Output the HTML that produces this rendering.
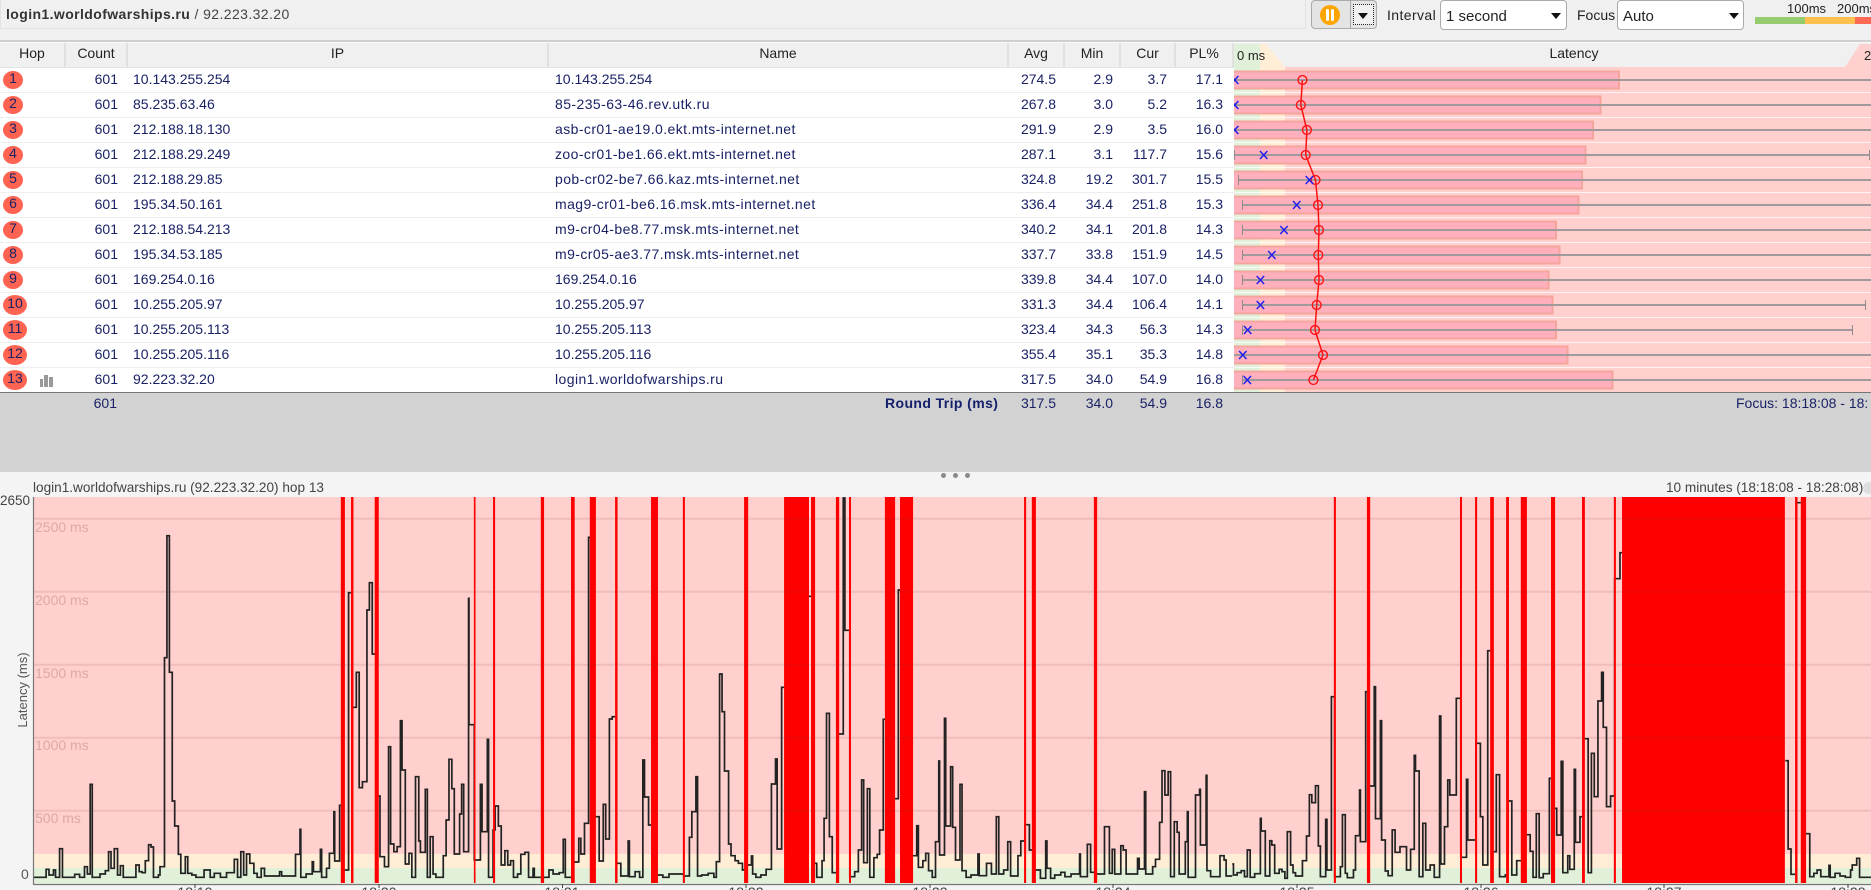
<!DOCTYPE html>
<html>
<head>
<meta charset="utf-8">
<title>PingPlotter</title>
<style>
html,body{margin:0;padding:0;width:1871px;height:890px;overflow:hidden;}
body{position:relative;background:#f4f4f4;font:14px "Liberation Sans",sans-serif;color:#1a2266;}
div,span{position:absolute;white-space:nowrap;}
#w{left:0;top:0;width:1871px;height:890px;overflow:hidden;background:#f4f4f4;}
svg{position:absolute;left:0;top:0;overflow:hidden;}
.toolbar{left:0;top:0;width:1871px;height:41px;background:#f0f0f0;}
.sel{top:0;height:28px;background:#fff;border:1px solid #aaa;border-radius:4px;color:#222;line-height:31px;font-size:15px;}
.sel i{position:absolute;top:12px;width:0;height:0;border-left:5px solid transparent;border-right:5px solid transparent;border-top:6px solid #111;}
.lbl{color:#222;top:7px;line-height:16px;}
.hd{top:43px;height:24px;line-height:20px;background:#f0f0f0;border-right:2px solid #e0e0e0;text-align:center;color:#222;box-sizing:border-box;}
.row{left:0;width:1234px;height:25px;background:#fff;line-height:23px;border-bottom:1px solid #eee;box-sizing:border-box;}
.row span,.sum span{top:0;}
.h{left:3px;top:3px!important;width:20px;height:18px;line-height:15px;text-align:center;background:#ff6453;border-radius:50%;}
.w{left:3px;top:2px!important;width:24px;height:20px;line-height:17px;text-align:center;background:#ff6453;border-radius:50%;}
.c{right:1116px;}.ip{left:133px;}.n{left:555px;}.l{letter-spacing:.42px;}
.a{right:178px;}.m{right:121px;}.u{right:67px;}.p{right:11px;}
.sum{left:0;top:393px;width:1871px;height:79px;background:#d2d2d2;line-height:20px;}
.t{top:884px;font-size:14px;color:#444;line-height:16px;width:60px;margin-left:-30px;text-align:center;}
.g{left:35px;color:#dba9a6;line-height:16px;font-size:14px;}
.d{top:473px;width:5px;height:5px;border-radius:50%;background:#8a8a8a;}
</style>
</head>
<body>
<div id="w">

<div class="toolbar"></div>
<div style="left:0;top:0;width:1306px;height:29px;box-sizing:border-box;border:1px solid #e2e2e2;border-top:0;"></div>
<div style="left:6px;top:6px;line-height:16px;color:#444;letter-spacing:.4px;"><b style="color:#333">login1.worldofwarships.ru</b> / 92.223.32.20</div>

<div style="left:1311px;top:0;width:66px;height:29px;box-sizing:border-box;border:1px solid #aaa;border-radius:4px;background:#e4e4e4;"></div>
<div style="left:1350px;top:1px;width:1px;height:27px;background:#aaa;"></div>
<div style="left:1353px;top:4px;width:21px;height:21px;box-sizing:border-box;border:1px dotted #222;background:#f0f0f0;"></div>
<div style="left:1358px;top:13px;width:0;height:0;border-left:5px solid transparent;border-right:5px solid transparent;border-top:6px solid #111;"></div>
<div style="left:1320px;top:5px;width:20px;height:20px;border-radius:50%;background:#ffa500;"></div>
<div style="left:1326px;top:9px;width:3px;height:12px;background:#fff;border-radius:2px;"></div>
<div style="left:1331px;top:9px;width:3px;height:12px;background:#fff;border-radius:2px;"></div>

<div class="lbl" style="left:1387px;letter-spacing:.4px;">Interval</div>
<div class="sel" style="left:1440px;width:125px;"><span style="left:5px;">1 second</span><i style="left:110px;"></i></div>
<div class="lbl" style="left:1577px;">Focus</div>
<div class="sel" style="left:1617px;width:125px;"><span style="left:5px;">Auto</span><i style="left:111px;"></i></div>

<div style="left:1787px;top:2px;font-size:13px;line-height:14px;color:#222;">100ms</div>
<div style="left:1837px;top:2px;font-size:13px;line-height:14px;color:#222;">200ms</div>
<div style="left:1755px;top:17px;width:50px;height:7px;background:#96cc6d;"></div>
<div style="left:1805px;top:17px;width:50px;height:7px;background:#ffc04f;"></div>
<div style="left:1855px;top:17px;width:16px;height:7px;background:#ff6a55;"></div>

<div style="left:0;top:40px;width:1871px;height:2px;background:#cfcfcf;"></div>
<div style="left:0;top:42px;width:1871px;height:1px;background:#fafafa;"></div>

<div class="hd" style="left:0;width:66px;">Hop</div>
<div class="hd" style="left:66px;width:62px;">Count</div>
<div class="hd" style="left:128px;width:421px;">IP</div>
<div class="hd" style="left:549px;width:460px;">Name</div>
<div class="hd" style="left:1009px;width:56px;">Avg</div>
<div class="hd" style="left:1065px;width:56px;">Min</div>
<div class="hd" style="left:1121px;width:55px;">Cur</div>
<div class="hd" style="left:1176px;width:58px;">PL%</div>
<div style="left:0;top:67px;width:1234px;height:1px;background:#e4e4e4;"></div>

<div class="row" style="top:68px;"><span class="h">1</span><span class="c">601</span><span class="ip">10.143.255.254</span><span class="n">10.143.255.254</span><span class="a">274.5</span><span class="m">2.9</span><span class="u">3.7</span><span class="p">17.1</span></div>
<div class="row" style="top:93px;"><span class="h">2</span><span class="c">601</span><span class="ip">85.235.63.46</span><span class="n l">85-235-63-46.rev.utk.ru</span><span class="a">267.8</span><span class="m">3.0</span><span class="u">5.2</span><span class="p">16.3</span></div>
<div class="row" style="top:118px;"><span class="h">3</span><span class="c">601</span><span class="ip">212.188.18.130</span><span class="n l">asb-cr01-ae19.0.ekt.mts-internet.net</span><span class="a">291.9</span><span class="m">2.9</span><span class="u">3.5</span><span class="p">16.0</span></div>
<div class="row" style="top:143px;"><span class="h">4</span><span class="c">601</span><span class="ip">212.188.29.249</span><span class="n l">zoo-cr01-be1.66.ekt.mts-internet.net</span><span class="a">287.1</span><span class="m">3.1</span><span class="u">117.7</span><span class="p">15.6</span></div>
<div class="row" style="top:168px;"><span class="h">5</span><span class="c">601</span><span class="ip">212.188.29.85</span><span class="n l">pob-cr02-be7.66.kaz.mts-internet.net</span><span class="a">324.8</span><span class="m">19.2</span><span class="u">301.7</span><span class="p">15.5</span></div>
<div class="row" style="top:193px;"><span class="h">6</span><span class="c">601</span><span class="ip">195.34.50.161</span><span class="n l">mag9-cr01-be6.16.msk.mts-internet.net</span><span class="a">336.4</span><span class="m">34.4</span><span class="u">251.8</span><span class="p">15.3</span></div>
<div class="row" style="top:218px;"><span class="h">7</span><span class="c">601</span><span class="ip">212.188.54.213</span><span class="n l">m9-cr04-be8.77.msk.mts-internet.net</span><span class="a">340.2</span><span class="m">34.1</span><span class="u">201.8</span><span class="p">14.3</span></div>
<div class="row" style="top:243px;"><span class="h">8</span><span class="c">601</span><span class="ip">195.34.53.185</span><span class="n l">m9-cr05-ae3.77.msk.mts-internet.net</span><span class="a">337.7</span><span class="m">33.8</span><span class="u">151.9</span><span class="p">14.5</span></div>
<div class="row" style="top:268px;"><span class="h">9</span><span class="c">601</span><span class="ip">169.254.0.16</span><span class="n">169.254.0.16</span><span class="a">339.8</span><span class="m">34.4</span><span class="u">107.0</span><span class="p">14.0</span></div>
<div class="row" style="top:293px;"><span class="w">10</span><span class="c">601</span><span class="ip">10.255.205.97</span><span class="n">10.255.205.97</span><span class="a">331.3</span><span class="m">34.4</span><span class="u">106.4</span><span class="p">14.1</span></div>
<div class="row" style="top:318px;"><span class="w">11</span><span class="c">601</span><span class="ip">10.255.205.113</span><span class="n">10.255.205.113</span><span class="a">323.4</span><span class="m">34.3</span><span class="u">56.3</span><span class="p">14.3</span></div>
<div class="row" style="top:343px;"><span class="w">12</span><span class="c">601</span><span class="ip">10.255.205.116</span><span class="n">10.255.205.116</span><span class="a">355.4</span><span class="m">35.1</span><span class="u">35.3</span><span class="p">14.8</span></div>
<div class="row" style="top:368px;"><span class="w">13</span><span class="c">601</span><span class="ip">92.223.32.20</span><span class="n l">login1.worldofwarships.ru</span><span class="a">317.5</span><span class="m">34.0</span><span class="u">54.9</span><span class="p">16.8</span>
<span style="left:40px;top:11px;width:3px;height:8px;background:#999;"></span><span style="left:44px;top:7px;width:4px;height:12px;background:#999;"></span><span style="left:49px;top:9px;width:4px;height:10px;background:#999;"></span></div>

<!-- latency column -->
<svg width="1871" height="400" style="left:0;top:0;">
  <defs><clipPath id="lc"><rect x="1234" y="44" width="637" height="348"/></clipPath></defs>
  <rect x="1234" y="44" width="637" height="348" fill="#ffd0cd"/>
  <rect x="1234" y="67" width="26" height="325" fill="#e1f0d8"/>
  <rect x="1260" y="67" width="25" height="325" fill="#ffedd6"/>
  <rect x="1234" y="43" width="637" height="24" fill="#f0f0f0"/>
  <rect x="1234" y="44" width="26" height="23" fill="#e1f0d8"/>
  <polygon points="1260,44 1266,44 1285,67 1260,67" fill="#ffedd6"/>
  <polygon points="1845,67 1860,44 1871,44 1871,67" fill="#ffd0cd"/>
  <g stroke="#fff" stroke-opacity=".75" stroke-width="1">
    <path d="M1234 92.5H1871M1234 117.5H1871M1234 142.5H1871M1234 167.5H1871M1234 192.5H1871M1234 217.5H1871M1234 242.5H1871M1234 267.5H1871M1234 292.5H1871M1234 317.5H1871M1234 342.5H1871M1234 367.5H1871"/>
  </g>
  <g clip-path="url(#lc)">
  <g fill="#ffb0bc" stroke="#f4a59c" stroke-width="2">
    <rect x="1228" y="71.5" width="391" height="17"/>
    <rect x="1228" y="96.5" width="372.5" height="17"/>
    <rect x="1228" y="121.5" width="365" height="17"/>
    <rect x="1228" y="146.5" width="357.5" height="17"/>
    <rect x="1228" y="171.5" width="354" height="17"/>
    <rect x="1228" y="196.5" width="350.5" height="17"/>
    <rect x="1228" y="221.5" width="328" height="17"/>
    <rect x="1228" y="246.5" width="331.5" height="17"/>
    <rect x="1228" y="271.5" width="320.5" height="17"/>
    <rect x="1228" y="296.5" width="324.5" height="17"/>
    <rect x="1228" y="321.5" width="328" height="17"/>
    <rect x="1228" y="346.5" width="339.5" height="17"/>
    <rect x="1228" y="371.5" width="384.5" height="17"/>
  </g>
  <g stroke="#a09a9c" stroke-width="2" fill="none">
    <path d="M1234 80H1871M1234 105H1871M1234 130H1871M1234 155H1870M1238 180H1871M1242 205H1871M1242 230H1871M1242 255H1871M1242 280H1871M1242 305H1865M1242 330H1852M1234 355H1871M1242 380H1871"/>
  </g>
  <g stroke="#8f8a8c" stroke-width="1" fill="none">
    <path d="M1234.5 150V160M1869.5 150V160M1238.5 175V185M1242.5 200V210M1242.5 225V235M1242.5 250V260M1242.5 275V285M1242.5 300V310M1865.5 300V310M1242.5 325V335M1852.5 325V335M1242.5 375V385"/>
  </g>
  <polyline fill="none" stroke="#f11" stroke-width="1.5" points="1302.4,80 1300.8,105 1306.9,130 1305.7,155 1315.5,180 1318,205 1319,230 1318.3,255 1319,280 1316.7,305 1315,330 1323,355 1313.4,380"/>
  <g fill="none" stroke="#f11" stroke-width="1.4">
    <circle cx="1302.4" cy="80" r="4.4"/><circle cx="1300.8" cy="105" r="4.4"/><circle cx="1306.9" cy="130" r="4.4"/><circle cx="1305.7" cy="155" r="4.4"/><circle cx="1315.5" cy="180" r="4.4"/><circle cx="1318" cy="205" r="4.4"/><circle cx="1319" cy="230" r="4.4"/><circle cx="1318.3" cy="255" r="4.4"/><circle cx="1319" cy="280" r="4.4"/><circle cx="1316.7" cy="305" r="4.4"/><circle cx="1315" cy="330" r="4.4"/><circle cx="1323" cy="355" r="4.4"/><circle cx="1313.4" cy="380" r="4.4"/>
  </g>
  <g stroke="#2020ee" stroke-width="1.5" fill="none">
    <path d="M1231 76l7.4 8M1238.4 76l-7.4 8M1231 101l7.4 8M1238.4 101l-7.4 8M1231 126l7.4 8M1238.4 126l-7.4 8"/>
    <path d="M1260 151l7.4 8M1267.4 151l-7.4 8M1305.7 176l7.4 8M1313.1 176l-7.4 8M1293 201l7.4 8M1300.4 201l-7.4 8M1280.3 226l7.4 8M1287.7 226l-7.4 8M1268.1 251l7.4 8M1275.5 251l-7.4 8M1256.7 276l7.4 8M1264.1 276l-7.4 8M1256.7 301l7.4 8M1264.1 301l-7.4 8M1244 326l7.4 8M1251.4 326l-7.4 8M1239.1 351l7.4 8M1246.5 351l-7.4 8M1243.6 376l7.4 8M1251 376l-7.4 8"/>
  </g>
  </g>
  <rect x="0" y="392" width="1871" height="1.5" fill="#777"/>
</svg>
<div style="left:1504px;top:43px;width:140px;text-align:center;line-height:20px;color:#222;">Latency</div>
<div style="left:1237px;top:49px;line-height:14px;font-size:13px;color:#222;">0 ms</div>
<div style="left:1864px;top:49px;line-height:14px;font-size:13px;color:#222;">2</div>

<div class="sum">
  <span class="c" style="right:1754px;left:auto;top:0;">601</span>
  <span style="left:885px;top:0;color:#14206b;letter-spacing:.4px;"><b>Round Trip (ms)</b></span>
  <span style="right:815px;top:0;">317.5</span>
  <span style="right:758px;top:0;">34.0</span>
  <span style="right:704px;top:0;">54.9</span>
  <span style="right:648px;top:0;">16.8</span>
  <span style="left:1736px;top:0;">Focus: 18:18:08 - 18:</span>
</div>

<div class="d" style="left:941px;"></div><div class="d" style="left:953px;"></div><div class="d" style="left:965px;"></div>

<div style="left:33px;top:480px;line-height:16px;color:#444;font-size:13.6px;">login1.worldofwarships.ru (92.223.32.20) hop 13</div>
<div style="left:1666px;top:480px;line-height:16px;color:#444;font-size:13.6px;">10 minutes (18:18:08 - 18:28:08)</div>
<div style="left:1863px;top:482px;width:12px;height:12px;border-radius:50%;background:#ddd;"></div>

<div style="left:0;top:493px;line-height:16px;color:#444;font-size:13.5px;">2650</div>
<div style="left:21px;top:866px;line-height:16px;color:#555;">0</div>
<div style="left:-27px;top:682px;width:100px;text-align:center;line-height:16px;color:#555;font-size:13px;transform:rotate(-90deg);">Latency (ms)</div>

<!-- graph -->
<svg width="1871" height="890" style="left:0;top:0;">
  <defs><clipPath id="cp"><rect x="33.5" y="497" width="1838" height="386.5"/></clipPath></defs>
  <g clip-path="url(#cp)">
    <rect x="33.5" y="497" width="1838" height="357" fill="#ffd0cd"/>
    <rect x="33.5" y="854" width="1838" height="14" fill="#ffedd6"/>
    <rect x="33.5" y="868" width="1838" height="16" fill="#e1f0d8"/>
    <g fill="none" stroke="#222" stroke-width="1.7">
      <path transform="translate(0,690) scale(.40816,.33333)" style="vector-effect:non-scaling-stroke" d="M82 562H113V538H120V555H131V540H136V562H146V476H153V562H183V553H195V562H207V530H214V552H221V283H226V562H245V552H258V542H266V485H272V535H280V476H288V555H295V527H302V562H333V525H341V545H348V548H356V512H364V464H370V471H376V562H388V555H392V530H403V-97H409V-463H415V-53H422V333H428V408H437V493H443V550H454V500H460V550H470V555H480V562H500V540H515V562H525V550H540V562H555V548H574V508H582V562H590V485H597V555H604V492H612V520H622V550H630V562H640V535H648V558H685V545H690V558H724V493H735V418H737V562H750V552H765V515H768V545H785V478H788V562H800V535H807V490H818V365H820V513H832V346H840V540H854V-292H862V52H873V-53H880V293H888V275H899V-240H905V-322H912V-108H922V318H931V500H942V530H952V170H957V462H965V485H973V470H981V92H985V240H993V522H1002V490H1009V562H1018V260H1026V453H1030V487H1042V298H1047V562H1054V440H1061V552H1068V562H1086V497H1093V390H1100V208H1107V296H1113V492H1126V372H1131V283H1136V485H1148V-275H1149V104H1162V510H1177V283H1181V425H1194V148H1197V562H1208V420H1213V348H1221V408H1228V525H1237V482H1244V525H1251V512H1258V562H1268V552H1276V493H1286V487H1295V562H1306V535H1309V562H1345V540H1355V552H1370V548H1380V448H1385V562H1404V516H1418V445H1423V492H1432V400H1442V-458H1452V380H1468V513H1478V343H1484V447H1493V87H1500V80H1510V520H1520"/>
      <path transform="translate(620,690) scale(.40816,.33333)" style="vector-effect:non-scaling-stroke" d="M0 520H2V558H20V453H23V560H37V545H48V562H56V210H60V321H70V405H80V555H105V562H120V552H156V558H170V442H176V365H186V260H190V558H200V555H216V550H230V562H236V515H244V-48H250V65H256V243H266V462H272V497H282V512H290V520H300V540H309V525H322V498H325V552H333V562H345V555H358V538H371V282H381V207H385V477H396V-8H430V-281H473V520H482V562H495V512H500V385H506V70H513V440H520V548H533V132H547V-576H551V-179H563V560H575V545H584V480H592V270H597V518H606V296H612V562H622V503H630V493H636V420H645V88H665V326H682V-300H700V497H727V407H731V532H742V512H749V490H756V542H765V562H773V455H781V213H783V495H795V85H798V408H810V230H815V412H822V510H833V283H838V542H848V562H860V555H877V492H880V557H898V520H910V552H922V380H928V552H940V540H950V455H957V558H975V497H982V453H992V404H1003V480H1014V540H1030V565H1043V453H1046V535H1055V565H1065V555H1080V547H1090V560H1105V552H1126V492H1128V560H1145V463H1153V547H1165V552H1187V410H1199V550H1206V478H1212V552H1227V467H1233V480H1240V552H1268V505H1272V537H1285V305H1288V552H1305V530H1312V508H1322V397H1328V242H1335V315H1343V245H1349V560H1358V395H1365V427H1370V552H1385V455H1390V365H1392V562H1410V315H1420V298H1422V465H1436V256H1438V542H1447V560H1470V497H1480V510H1485V558H1500"/>
      <path transform="translate(1231,690) scale(.40816,.33333)" style="vector-effect:non-scaling-stroke" d="M3 522H6V555H15V548H25V542H33V560H40V480H47V562H58V551H72V385H74V423H84V558H95V452H100V465H107V550H118V538H125V545H132V565H138V425H146V525H152V548H158V558H175V512H185V438H192V314H198V338H207V287H214V468H219V560H232V388H235V540H246V20H254V560H268V530H273V374H280V550H285V563H300V540H305V437H315V300H317V455H330V5H337V288H351V-10H354V386H366V92H369V450H378V543H385V557H395V420H402V487H414V470H430V540H440V478H449V196H452V243H461V560H470V400H477V540H488V525H498V562H511V78H514V522H523V410H531V270H536V315H552V25H563V502H577V268H580V450H600V160H611V380H617V525H629V-118H640V485H650V254H658V560H672V555H678V333H688V555H700V512H717V434H733V484H740V562H748V371H755V563H765V551H780V265H789V355H798V435H809V214H813V548H825V497H830V538H841V238H844V457H855V380H863V146H875V548H883V190H890V320H899V33H908V-53H912V112H920V350H930V318H940V-334H953V-412H958"/>
      <path transform="translate(1231,690) scale(.40816,.33333)" style="vector-effect:non-scaling-stroke" d="M1358 212H1365V477H1372V553H1385M1388 -562H1396M1403 431H1418V560H1428V550H1436V540H1445V560H1465V526H1468V562H1480V550H1492V558H1505V562H1518V540H1522V525H1533V505H1540V562H1568"/>
    </g>
    <g fill="#f00">
      <g transform="translate(0,690) scale(.40816,.33333)">
        <rect x="835" y="-579" width="10" height="1158"/><rect x="860" y="-579" width="6" height="1158"/><rect x="918" y="-579" width="10" height="1158"/><rect x="1161" y="-579" width="4" height="1158"/><rect x="1208" y="-579" width="5" height="1158"/><rect x="1325" y="-579" width="8" height="1158"/><rect x="1399" y="-579" width="9" height="1158"/><rect x="1445" y="-579" width="15" height="1158"/><rect x="1507" y="-579" width="6" height="1158"/>
      </g>
      <g transform="translate(620,690) scale(.40816,.33333)">
        <rect x="76" y="-579" width="17" height="1158"/><rect x="154" y="-579" width="5" height="1158"/><rect x="304" y="-579" width="10" height="1158"/><rect x="402" y="-579" width="61" height="1158"/><rect x="468" y="-579" width="10" height="1158"/><rect x="529" y="-579" width="8" height="1158"/><rect x="561" y="-579" width="5" height="1158"/><rect x="649" y="-579" width="25" height="1158"/><rect x="686" y="-579" width="32" height="1158"/><rect x="990" y="-579" width="5" height="1158"/><rect x="1009" y="-579" width="10" height="1158"/><rect x="1161" y="-579" width="8" height="1158"/>
      </g>
      <g transform="translate(1231,690) scale(.40816,.33333)">
        <rect x="252" y="-579" width="5" height="1158"/><rect x="333" y="-579" width="8" height="1158"/><rect x="561" y="-579" width="5" height="1158"/><rect x="598" y="-579" width="5" height="1158"/><rect x="635" y="-579" width="9" height="1158"/><rect x="674" y="-579" width="7" height="1158"/><rect x="710" y="-579" width="15" height="1158"/><rect x="784" y="-579" width="10" height="1158"/><rect x="860" y="-579" width="7" height="1158"/><rect x="938" y="-579" width="5" height="1158"/><rect x="958" y="-579" width="399" height="1158"/><rect x="1382" y="-579" width="6" height="1158"/><rect x="1396" y="-579" width="13" height="1158"/>
      </g>
    </g>
    <path d="M33.5 518.7H1871M33.5 591.7H1871M33.5 664.7H1871M33.5 737.7H1871M33.5 810.7H1871" stroke="#6a2a2a" stroke-opacity=".11" stroke-width="2" fill="none"/>
  </g>
  <path d="M33.5 497V884.5H1871" stroke="#777" stroke-width="1.2" fill="none"/>
  <path d="M195 884V888M379 884V888M562.5 884V888M746 884V888M930 884V888M1113 884V888M1297 884V888M1481 884V888M1664 884V888M1848 884V888" stroke="#444" stroke-width="1"/>
</svg>
<div class="g" style="top:519px;">2500 ms</div>
<div class="g" style="top:592px;">2000 ms</div>
<div class="g" style="top:665px;">1500 ms</div>
<div class="g" style="top:737px;">1000 ms</div>
<div class="g" style="top:810px;">500 ms</div>

<div class="t" style="left:195px;">18:19</div>
<div class="t" style="left:379px;">18:20</div>
<div class="t" style="left:562px;">18:21</div>
<div class="t" style="left:746px;">18:22</div>
<div class="t" style="left:930px;">18:23</div>
<div class="t" style="left:1113px;">18:24</div>
<div class="t" style="left:1297px;">18:25</div>
<div class="t" style="left:1481px;">18:26</div>
<div class="t" style="left:1664px;">18:27</div>
<div class="t" style="left:1848px;">18:28</div>
</div>
</body>
</html>
